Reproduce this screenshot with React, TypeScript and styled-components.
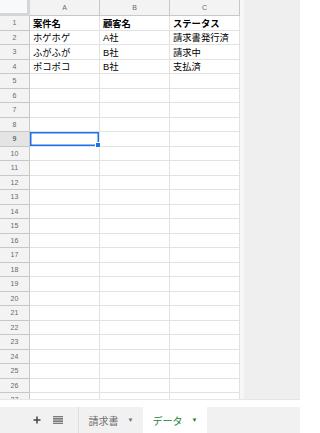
import styled, { createGlobalStyle } from "styled-components";

const GlobalStyle = createGlobalStyle`
  html, body { margin: 0; padding: 0; background: #ffffff; }
  body { font-family: "Liberation Sans", "Noto Sans CJK JP", sans-serif; }
`;

const ROW_H = 14.5;
const HEAD_H = 16;

const columns = ["A", "B", "C"];
const data: string[][] = [
  ["案件名", "顧客名", "ステータス"],
  ["ホゲホゲ", "A社", "請求書発行済"],
  ["ふがふが", "B社", "請求中"],
  ["ポコポコ", "B社", "支払済"],
];
const ROWS = 27;
const SELECTED_ROW = 9;

const Page = styled.div`
  width: 300px;
  height: 433px;
  display: flex;
  flex-direction: column;
  overflow: hidden;
  background: #ffffff;
`;

const SheetArea = styled.div`
  height: 399px;
  display: flex;
  overflow: hidden;
`;

const Grid = styled.div`
  display: grid;
  grid-template-columns: 30px 70px 70px 70px;
  grid-template-rows: ${HEAD_H}px;
  grid-auto-rows: ${ROW_H}px;
  width: 240px;
  flex: none;
  align-content: start;
`;

const Gutter = styled.div`
  flex: 1;
  border-left: 4px solid #f7f7f7;
  background: #efefef;
`;

const Corner = styled.div`
  background: #f8f9fa;
  border-right: 3px solid #d6d6d6;
  border-bottom: 3px solid #d6d6d6;
  box-sizing: border-box;
`;

const ColHead = styled.div`
  background: #f3f3f3;
  border-right: 1px solid #c7c7c7;
  border-bottom: 1px solid #c7c7c7;
  box-sizing: border-box;
  display: flex;
  align-items: center;
  justify-content: center;
  font-size: 7px;
  color: #6a6a6a;
`;

const RowHead = styled.div<{ $active?: boolean }>`
  background: ${(p) => (p.$active ? "#e4e4e4" : "#f3f3f3")};
  border-right: 1px solid #c7c7c7;
  border-bottom: 1px solid #c7c7c7;
  box-sizing: border-box;
  display: flex;
  align-items: center;
  justify-content: center;
  font-size: 7px;
  color: ${(p) => (p.$active ? "#333333" : "#6a6a6a")};
`;

const Cell = styled.div<{ $bold?: boolean; $selected?: boolean }>`
  position: relative;
  border-right: 1px solid #e2e2e2;
  border-bottom: 1px solid #e2e2e2;
  box-sizing: border-box;
  padding: 0 3px;
  display: flex;
  align-items: center;
  font-size: 9.3px;
  font-weight: ${(p) => (p.$bold ? 700 : 400)};
  color: #000000;
  white-space: nowrap;
  overflow: visible;
  ${(p) =>
    p.$selected &&
    `
    box-shadow: inset 0 0 0 1.5px #1a73e8;
    &::after {
      content: "";
      position: absolute;
      right: -2px;
      bottom: -2px;
      width: 4px;
      height: 4px;
      background: #1a73e8;
      border: 1px solid #ffffff;
      z-index: 2;
    }
  `}
`;

const ScrollBand = styled.div`
  height: 8px;
  border-top: 1px solid #e6e6e6;
  background: #ffffff;
  box-sizing: border-box;
`;

const TabBar = styled.div`
  height: 26px;
  display: flex;
  align-items: stretch;
  background: #f1f1f1;
`;

const Tools = styled.div`
  width: 79px;
  display: flex;
  align-items: center;
  justify-content: flex-end;
  gap: 12px;
  padding-right: 15px;
  box-sizing: border-box;
  border-right: 1px solid #dedede;
`;

const Tab = styled.div<{ $active?: boolean }>`
  width: 64px;
  display: flex;
  align-items: center;
  justify-content: center;
  gap: 9px;
  font-size: 10px;
  background: ${(p) => (p.$active ? "#ffffff" : "transparent")};
  color: ${(p) => (p.$active ? "#188038" : "#6f6f6f")};
`;

const Caret = styled.span`
  font-size: 6px;
  line-height: 1;
`;

const PlusIcon = () => (
  <svg width="8" height="8" viewBox="0 0 8 8">
    <path d="M4 0.5v7M0.5 4h7" stroke="#444" strokeWidth="1.5" />
  </svg>
);

const ListIcon = () => (
  <svg width="10" height="8" viewBox="0 0 10 8">
    <path d="M0 0.8h10M0 2.9h10M0 5.1h10M0 7.2h10" stroke="#555" strokeWidth="1.1" />
  </svg>
);

export default function App() {
  const cells = [];
  cells.push(<Corner key="corner" />);
  columns.forEach((c) => cells.push(<ColHead key={`h-${c}`}>{c}</ColHead>));
  for (let r = 1; r <= ROWS; r++) {
    cells.push(
      <RowHead key={`r-${r}`} $active={r === SELECTED_ROW}>
        {r}
      </RowHead>
    );
    columns.forEach((c, ci) => {
      const text = data[r - 1]?.[ci] ?? "";
      cells.push(
        <Cell key={`${c}${r}`} $bold={r === 1} $selected={r === SELECTED_ROW && ci === 0}>
          {text}
        </Cell>
      );
    });
  }

  return (
    <>
      <GlobalStyle />
      <Page>
        <SheetArea>
          <Grid>{cells}</Grid>
          <Gutter />
        </SheetArea>
        <ScrollBand />
        <TabBar>
          <Tools>
            <PlusIcon />
            <ListIcon />
          </Tools>
          <Tab>
            請求書<Caret>▼</Caret>
          </Tab>
          <Tab $active>
            データ<Caret>▼</Caret>
          </Tab>
        </TabBar>
      </Page>
    </>
  );
}
